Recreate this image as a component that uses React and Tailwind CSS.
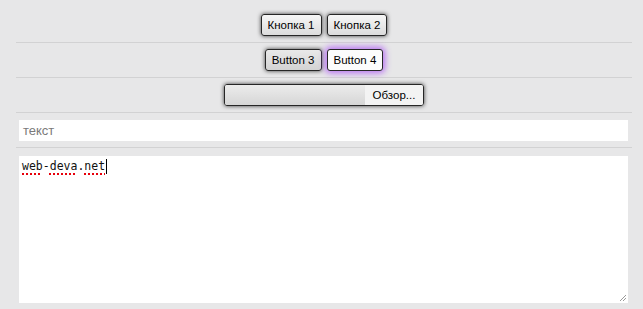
export default function App() {
  const btn =
    'inline-block h-[22px] px-[6px] rounded-[3px] border border-[#262626] text-[11.5px] leading-[20px] text-black shadow-[0_0_4px_rgba(0,0,0,0.75)]';
  const wavy = 'underline decoration-dotted decoration-red-600 decoration-[1.5px] underline-offset-[3px]';

  return (
    <div className="w-[643px] h-[309px] bg-[#e7e7e8] overflow-hidden" style={{ fontFamily: '"Liberation Sans", Arial, sans-serif' }}>
      <div className="ml-4 mr-[11px] pt-2">
        {/* buttons row 1 */}
        <div className="flex justify-center gap-[5px] pt-[6px] pb-[6px] border-b border-[#d2d2d3]">
          <button className={`${btn} bg-gradient-to-b from-[#f6f6f6] to-[#dcdcdc]`}>Кнопка 1</button>
          <button className={`${btn} bg-gradient-to-b from-[#f6f6f6] to-[#dcdcdc]`}>Кнопка 2</button>
        </div>

        {/* buttons row 2 */}
        <div className="flex justify-center gap-[5px] py-[6px] border-b border-[#d2d2d3]">
          <button className={`${btn} bg-gradient-to-b from-[#e9e9e9] to-[#d3d3d3]`}>Button 3</button>
          <button className="inline-block h-[22px] px-[6px] rounded-[3px] border border-[#262626] bg-[#fcfcfc] text-[11.5px] leading-[20px] text-black shadow-[0_0_6px_2px_rgba(175,90,245,0.85)]">
            Button 4
          </button>
        </div>

        {/* file input */}
        <div className="flex justify-center py-[6px] border-b border-[#d2d2d3]">
          <div className="flex h-[22px] w-[200px] rounded-[3px] border border-[#262626] overflow-hidden shadow-[0_0_4px_rgba(0,0,0,0.75)]">
            <div className="flex-1 bg-gradient-to-b from-[#ececec] to-[#d6d6d6]" />
            <div className="w-[58px] bg-[#f3f3f3] text-[11.5px] leading-[20px] text-black text-center">Обзор...</div>
          </div>
        </div>

        {/* text input */}
        <div className="pt-[7px] pb-[6px] pl-[3px] pr-[4px] border-b border-[#d2d2d3]">
          <div className="h-[21px] bg-white pl-[4px] text-[13px] leading-[21px] text-[#7a7a7a]">текст</div>
        </div>

        {/* textarea */}
        <div className="pt-2 pl-[3px] pr-[4px]">
          <div className="relative h-[147px] bg-white pl-[3px] pt-[2px]">
            <div className="flex items-center text-[11.5px] leading-[17px] text-[#111]" style={{ fontFamily: '"DejaVu Sans Mono", "Liberation Mono", monospace' }}>
              <span className={wavy}>web</span>
              <span>-</span>
              <span className={wavy}>deva</span>
              <span>.</span>
              <span className={wavy}>net</span>
              <span className="inline-block w-px h-[15px] bg-black ml-px" />
            </div>
            <svg className="absolute right-[1px] bottom-[1px]" width="8" height="8" viewBox="0 0 8 8">
              <path d="M7 1 L1 7 M7 4 L4 7" stroke="#9a9a9a" strokeWidth="1" />
            </svg>
          </div>
        </div>
      </div>
    </div>
  );
}
